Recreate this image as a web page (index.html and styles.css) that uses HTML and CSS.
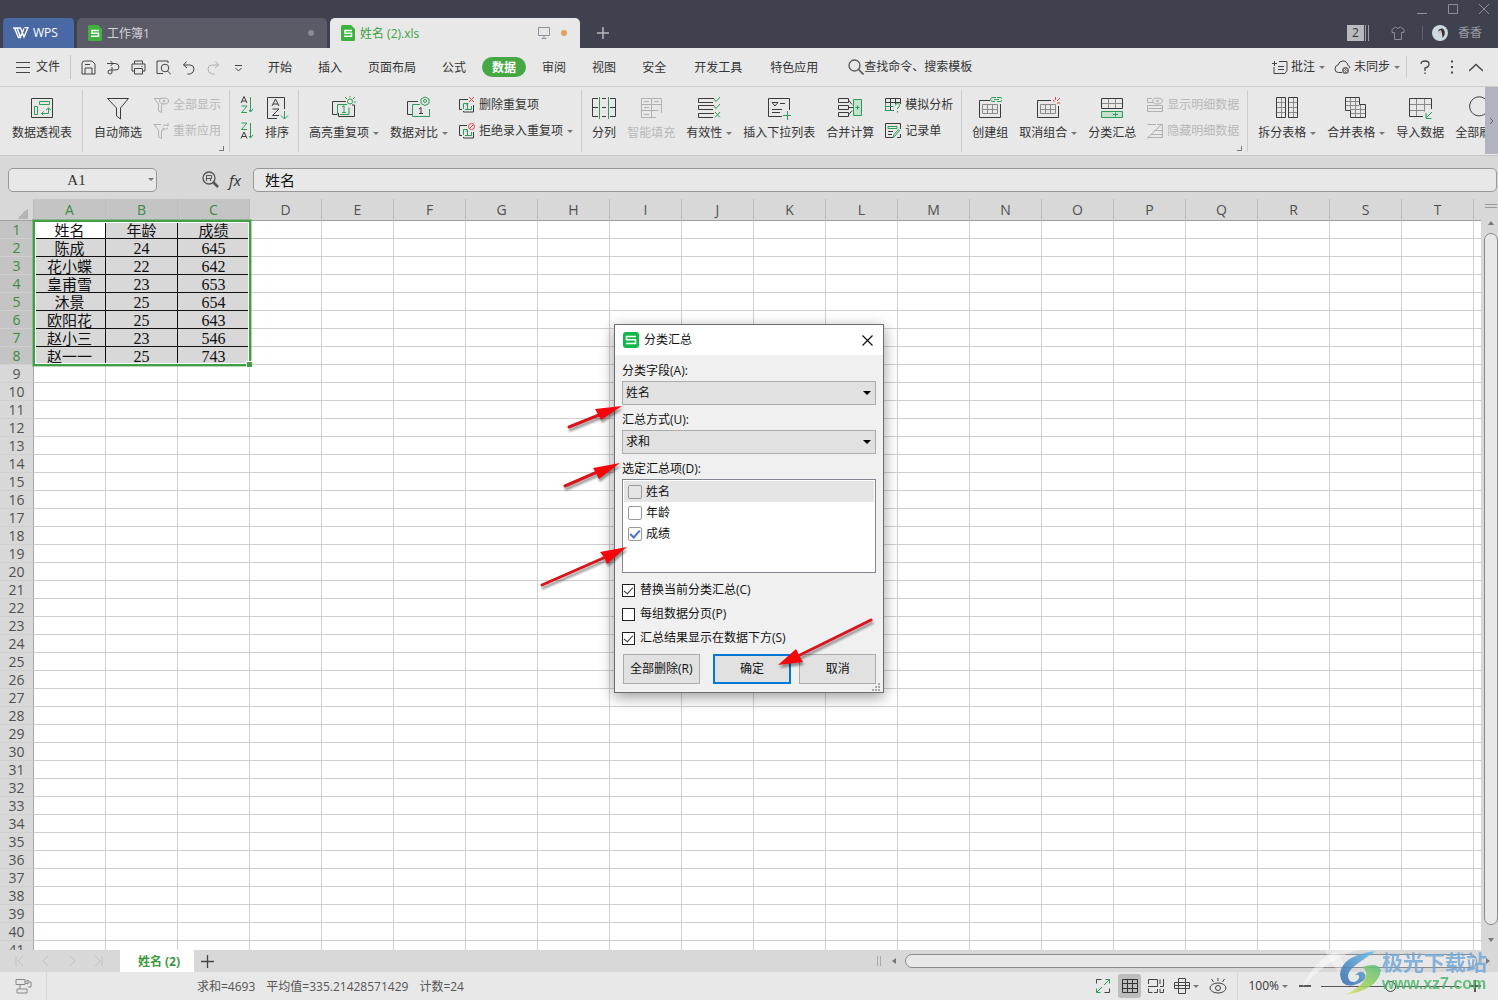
FILE: index.html
```html
<!DOCTYPE html>
<html lang="zh-CN">
<head>
<meta charset="utf-8">
<title>姓名 (2).xls - WPS</title>
<link rel="stylesheet" href="styles.css">
</head>
<body>
<header class="titlebar">
  <button class="app-tab"><svg width="16" height="12" viewBox="0 0 16 12"><path d="M0 1h4l3.5 9L11 1.500M4.500 1h3l3.500 9 4-9.500h-3.500M1.500 1l4 9.500h2" fill="none" stroke="#fff" stroke-width="1.400"/></svg>WPS</button>
  <div class="doc-tab"><svg width="14" height="16" viewBox="0 0 14 16"><path d="M0 1.500Q0 0 1.500 0H10l4 4v10.500q0 1.500-1.500 1.500h-11Q0 16 0 14.500z" fill="#3eb13e"/><path d="M11 5.500H4v2.700h6.500v3H3" fill="none" stroke="#fff" stroke-width="1.500"/></svg><span>工作簿1</span><i class="dot"></i></div>
  <div class="doc-tab active"><svg width="14" height="16" viewBox="0 0 14 16"><path d="M0 1.500Q0 0 1.500 0H10l4 4v10.500q0 1.500-1.500 1.500h-11Q0 16 0 14.500z" fill="#3eb13e"/><path d="M11 5.500H4v2.700h6.500v3H3" fill="none" stroke="#fff" stroke-width="1.500"/></svg><span>姓名 (2).xls</span><svg class="screen" width="12" height="12" viewBox="0 0 12 12"><path d="M.5.5h11v8H.5zM6 8.500v3M3.500 11.500h5" fill="none" stroke="#8a8f98"/></svg><i class="dot orange"></i></div>
  <button class="new-tab" aria-label="新建"><svg width="12" height="12" viewBox="0 0 12 12"><path d="M6 0v12M0 6h12" stroke="#b5b7bd" stroke-width="1.500"/></svg></button>
  <div class="title-right">
    <div class="window-controls">
      <svg width="12" height="12" viewBox="0 0 12 12"><path d="M1 10.500h10" stroke="#8d9099"/></svg>
      <svg width="12" height="12" viewBox="0 0 12 12"><path d="M1.500 1.500h9v9h-9z" fill="none" stroke="#8d9099"/></svg>
      <svg width="12" height="12" viewBox="0 0 12 12"><path d="M1 1l10 10M11 1L1 11" stroke="#8d9099"/></svg>
    </div>
    <div class="user-row">
      <span class="count">2</span><i class="bars"></i>
      <svg class="shirt" width="14" height="14" viewBox="0 0 14 14"><path d="M4.500 1L1 3.500v3h2.500v7h7v-7H13v-3L9.500 1Q7 4 4.500 1z" fill="none" stroke="#898c95"/></svg>
      <i class="divider"></i>
      <svg width="16" height="16" viewBox="0 0 16 16"><circle cx="8" cy="8" r="8" fill="#ced8e0"/><path d="M6 6Q7 3 10.500 3.500q3 1.500 2 6.500l-2 3-.5-5z" fill="#35313b"/><path d="M6 6.500l3-1.500 1 3.500-3 1z" fill="#d8c4c0"/></svg>
      <span class="user">香香</span>
    </div>
  </div>
</header>

<nav class="menubar">
  <button class="file"><svg width="14" height="11" viewBox="0 0 14 11"><path d="M0 .5h14M0 5.500h14M0 10.500h14" stroke="#444"/></svg>文件</button>
  <div class="quick">
    <svg viewBox="0 0 15 15"><path d="M1 3.500Q1 1 3.500 1H11l3 3v10H1zM4 14V8h7v6M4 4.500h5"/></svg>
    <svg viewBox="0 0 15 15"><path d="M1 3.500h8q4 0 4 3.500t-4 3H6v2q0 2-2 2t-2-2 2-2h2V7M4.500 1L7 3.500 4.500 6"/></svg>
    <svg viewBox="0 0 15 15"><path d="M3.500 4V1h8v3M3.500 11H1V4h13v7h-2.500M3.500 8.500h8V14h-8zM10.500 6.500h1"/></svg>
    <svg viewBox="0 0 15 15"><path d="M7 13.500H1V1h11v2M11.500 11l3.500 3.500"/><circle cx="9" cy="8" r="3.800"/></svg>
    <svg viewBox="0 0 15 15"><path d="M5.500 1.500L2.500 5 6 8M2.500 5H9q4 0 4 4t-4 5H6.500"/></svg>
    <svg class="off" viewBox="0 0 15 15"><path d="M9.500 1.500l3 3.500L9 8M12.500 5H6Q2 5 2 9t4 5h2.500"/></svg>
    <svg viewBox="0 0 15 15"><path d="M4 5.500h7M4.500 8l3 3 3-3"/></svg>
  </div>
  <div class="tabs">
    <a href="#">开始</a><a href="#">插入</a><a href="#">页面布局</a><a href="#">公式</a><a href="#" class="current">数据</a><a href="#">审阅</a><a href="#">视图</a><a href="#">安全</a><a href="#" class="wide">开发工具</a><a href="#" class="wide">特色应用</a>
  </div>
  <div class="search"><svg width="16" height="16" viewBox="0 0 16 16"><circle cx="6.500" cy="6.500" r="5.500" fill="none" stroke="#555" stroke-width="1.300"/><path d="M10.500 10.500l5 5" stroke="#555" stroke-width="1.600"/></svg>查找命令、搜索模板</div>
  <div class="menu-right">
    <span class="mr"><svg width="16" height="15" viewBox="0 0 16 15"><path d="M7 1.500h8v9l-2 3H2V7M0 3.500h5M2.500 1v5M6 6.500h6M6 9.500h6" fill="none" stroke="#444"/></svg>批注<i class="caret"></i></span>
    <span class="mr"><svg width="17" height="15" viewBox="0 0 17 15"><path d="M8 12.500H4.500Q1 12.500 1 9t3-4Q5 1 9 1t5 4.500q2 .5 2 2.500" fill="none" stroke="#444"/><circle cx="11.500" cy="10.500" r="3.500" fill="#777"/><path d="M10 9l3 3M13 9l-3 3" stroke="#e8e8e8"/></svg>未同步<i class="caret"></i></span>
    <i class="divider"></i>
    <svg class="help" width="10" height="15" viewBox="0 0 10 15"><path d="M1 4q0-3 4-3t4 3-4 4v3M5 12.500V14" fill="none" stroke="#444" stroke-width="1.300"/></svg>
    <svg width="4" height="15" viewBox="0 0 4 15"><path d="M1 1.500h2M1 7h2M1 12.500h2" stroke="#444" stroke-width="2"/></svg>
    <svg width="14" height="15" viewBox="0 0 14 15"><path d="M0 11l7-6.500L14 11" fill="none" stroke="#444" stroke-width="1.300"/></svg>
  </div>
</nav>

<section class="ribbon">
  <div class="group first">
    <button class="tool"><svg viewBox="0 0 24 24"><path d="M1.500 2.500h21v19h-21z"/><path class="g" d="M9.500 5.500h10v3h-10zM4.500 10.500h3v8h-3zM18.500 12v5.500h-7M16 14l2.500-2 2.500 2M13.500 15.500l-2 2 2 2"/></svg><span>数据透视表</span></button>
  </div>
  <div class="group">
    <button class="tool"><svg viewBox="0 0 24 24"><path d="M1.500 2.500h21l-8 9.500v11l-4-3v-8z"/></svg><span>自动筛选</span></button>
    <div class="stack off launch">
      <button class="small"><svg viewBox="0 0 16 16"><path d="M8 1.500H1l4.500 5.500v7l3 1.500V8L10 6.500"/><ellipse cx="11" cy="4" rx="4.500" ry="3"/><circle cx="11" cy="4" r="1"/></svg>全部显示</button>
      <button class="small"><svg viewBox="0 0 16 16"><path d="M8 1.500H1l4.500 5.500v7l3 1.500V8L10 6.500M10 3q2-2.500 5 0V0M15 5q-2 3-5 0v3"/></svg>重新应用</button>
    </div>
  </div>
  <div class="group">
    <div class="stack">
      <button class="small" aria-label="升序"><svg class="az" viewBox="0 0 14 18"><path d="M1 7l3-6.500L7 7M2 5h4"/><path class="g" d="M1.500 10H7l-5.500 6.500H7M10.500 1v15M13 13l-2.500 3L9 14"/></svg></button>
      <button class="small" aria-label="降序"><svg class="az" viewBox="0 0 14 18"><path class="g" d="M1.500 1H7L1.500 7.500H7M10.500 1v15M13 13l-2.500 3L9 14"/><path d="M1 16.500L4 10l3 6.500M2 14.500h4"/></svg></button>
    </div>
    <button class="tool"><svg viewBox="0 0 24 24"><path d="M19.500 13V1.500h-17v21H12M7 10l3.500-7L14 10M8 8h5M7.500 13H14l-6.500 6.500H14"/><path class="g" d="M19.500 15v8M16 19.500l3.500 3.500 3.500-3.500"/></svg><span>排序</span></button>
  </div>
  <div class="group">
    <button class="tool"><svg viewBox="0 0 24 24"><path d="M5 18.500H.5V5.500H14M20 9h2.500v11.500h-16V17"/><path class="g" d="M5.500 18.500v-10H15M8 18.500h9v-7M10 11l2-1.500v7M10 16.500h4"/><circle class="g" cx="18" cy="5.500" r="2.500"/><path class="g" d="M18 0v1.500M13 1l2 2M23 1l-2 2M22 6h2"/></svg><span>高亮重复项<i class="caret"></i></span></button>
    <button class="tool"><svg viewBox="0 0 24 24"><path d="M5 18.500H.5V5.500H11"/><path class="g" d="M13 8.500H5.500v12h17V13M18 1l4 2v4.500l-4 2-4-2V3z"/><circle class="g" cx="18" cy="5" r="1.500"/><path d="M12 13l2-1.500v6M12 17.500h4"/></svg><span>数据对比<i class="caret"></i></span></button>
    <div class="stack">
      <button class="small"><svg viewBox="0 0 16 16"><path d="M3 12.500H.5v-10H9M14.500 8v7h-10v-1"/><path class="g" d="M4.500 12V6.500h5M6 12.500h6.500V9M7 8.500L8.500 7v5"/><path class="r" d="M10 0l5 5M15 0l-5 5"/></svg>删除重复项</button>
      <button class="small"><svg viewBox="0 0 16 16"><path d="M3 12.500H.5v-10H8M14.500 9v6h-10v-1"/><path class="g" d="M4.500 12V6.500h4M6 12.500h6.500V9M7 8.500L8.500 7v5"/><circle class="r" cx="12.500" cy="3.500" r="3"/><path class="r" d="M10.500 5.500l4-4"/></svg>拒绝录入重复项<i class="caret"></i></button>
    </div>
  </div>
  <div class="group">
    <button class="tool"><svg viewBox="0 0 24 24"><path d="M6 2.500H.5v18H6M.5 11.500H6M10 2.500h4M10 11.500h4M10 20.500h4M18 2.500h5.500v18H18M18 11.500h5.500"/><path class="g" d="M7.500 1v22M16.500 1v22"/></svg><span>分列</span></button>
    <button class="tool off"><svg viewBox="0 0 24 24"><path d="M2.500 2.500h20V17M17 21.500H2.500v-19M12.500 2.500v19M2.500 8.500h20M2.500 14.500h17M5 5.500h5M15 5.500h5M5 11.500h5M5 18.500h5"/></svg><span>智能填充</span></button>
    <button class="tool"><svg viewBox="0 0 24 24"><path d="M17 2.500H1.500v4H16M17 9.500H1.500v4H16M17 17.500H1.500v4H16"/><path class="g" d="M17 3l2 2.500L23 1M17 10l2 2.500L23 8M18 16l5 5.500M23 16l-5 5.500"/></svg><span>有效性<i class="caret"></i></span></button>
    <button class="tool"><svg viewBox="0 0 24 24"><path d="M22.500 14V2.500h-21v18H15M5 6.500h6l-3 3.500zM13 7.500h5M5 13.500h10M5 16.500h8"/><path class="g" d="M20.500 15v9M16 19.500h8"/></svg><span>插入下拉列表</span></button>
    <button class="tool"><svg viewBox="0 0 24 24"><path d="M.5 2.500h10v4H.5zM.5 9.500h10v4H.5zM.5 16.500h10v4H.5zM11 4.500l3 4M11 18.500l3-4M11 11.500h4"/><path d="M15.500 3.500h8v16h-8z" class="gf"/><path class="g" d="M17.500 11.500h4M19.500 9.500v4"/></svg><span>合并计算</span></button>
    <div class="stack">
      <button class="small"><svg viewBox="0 0 16 16"><path d="M9 13.500H.5v-12h15V7M.5 5.500h15M5.500 1.500v12M10.500 1.500V7"/><path class="g" d="M.5 5.500V13.500H8M.5 9.500h8M10.500 8.500q0-2 2-2t2 2-2 2.500v1M12.500 14v1.500"/></svg>模拟分析</button>
      <button class="small"><svg viewBox="0 0 16 16"><path d="M15.500 6V.5H.5v14H8M12 14.500h3.500V11M3 8.500h5M3 11.500h4"/><path class="g" d="M3 3.500h9v2H3zM15 7l-5 6-2 1.500 1-3L14 6"/></svg>记录单</button>
    </div>
  </div>
  <div class="group">
    <button class="tool"><svg viewBox="0 0 24 24"><path d="M12 4.500H1.500v17h21V8"/><path class="t" d="M4.500 8.500h15v9h-15zM4.500 13.500h15M9.500 8.500v9M14.500 8.500v9"/><path class="g" d="M18 1.500h-3q-2.500 0-2.500 2T15 5.500h2M19 1.500h3q2.500 0 2.500 2t-2.500 2h-3M16 3.500h5"/></svg><span>创建组</span></button>
    <button class="tool"><svg viewBox="0 0 24 24"><path d="M15 4.500H1.500v17h21V10"/><path class="t" d="M4.500 8.500h15v9h-15zM4.500 13.500h15M9.500 8.500v9M14.500 8.500v9"/><path class="r" d="M17 4l1.500 2M19.500 1v3M24 2l-3 3M21 7h3"/></svg><span>取消组合<i class="caret"></i></span></button>
    <button class="tool"><svg viewBox="0 0 24 24"><path class="t" d="M1.500 7.500h21M8.500 2.500v10M15.500 2.500v10"/><path d="M1.500 2.500h21v10h-21z"/><path class="gf" d="M1.500 15.500h21v6h-21z"/><path class="g" d="M13 18.500h5M15.500 16.500v4"/></svg><span>分类汇总</span></button>
    <div class="stack off launch">
      <button class="small"><svg viewBox="0 0 16 16"><path d="M5 1.500H.5v4H6M15.500 8.500H.5v3h15zM.5 11.500v3h15v-3"/><ellipse cx="10.500" cy="4" rx="5" ry="3"/><circle cx="10.500" cy="4" r="1"/></svg>显示明细数据</button>
      <button class="small"><svg viewBox="0 0 16 16"><path d="M0 15.500L15 1M10 1.500h5.500v13H.5M7 7.500h8.500M4 11.500h11.500M.5 1.500H9"/></svg>隐藏明细数据</button>
    </div>
  </div>
  <div class="group last">
    <button class="tool"><svg viewBox="0 0 24 24"><path class="t" d="M1.500 6.500h9M1.500 11.500h9M1.500 16.500h9M6.500 1.500v20M13.500 6.500h9M13.500 11.500h9M13.500 16.500h9M18.500 1.500v20"/><path d="M1.500 1.500h9v20h-9zM13.500 1.500h9v20h-9z"/></svg><span>拆分表格<i class="caret"></i></span></button>
    <button class="tool"><svg viewBox="0 0 24 24"><path class="t" d="M1.500 5.500h14M1.500 9.500h14M6.500 1.500v13M11.500 1.500v20M6.500 17.500h15M6.500 13.500h15M16.500 8.500v13"/><path d="M15.500 8.500v-7h-14v13h5v7h15v-13z"/></svg><span>合并表格<i class="caret"></i></span></button>
    <button class="tool"><svg viewBox="0 0 24 24"><path class="t" d="M1.500 8.500h22M1.500 14.500H16M8.500 2.500v18M16.500 2.500v13"/><path d="M15 20.500H1.500v-18h22V13"/><path class="g" d="M24 16l-6 6M18 17v5.500h5.500"/></svg><span>导入数据</span></button>
    <button class="tool"><svg viewBox="0 0 24 24"><path d="M20 5A9.500 9.500 0 1 0 21.500 12"/></svg><span>全部刷新</span></button>
  </div>
  <button class="ribbon-scroll" aria-label="向右"><svg width="5" height="8" viewBox="0 0 5 8"><path d="M1 1l3 3-3 3" fill="none" stroke="#666"/></svg></button>
</section>

<section class="formula-bar">
  <label class="namebox"><input value="A1" aria-label="名称框"><i class="caret"></i></label>
  <svg class="lens" width="17" height="17" viewBox="0 0 17 17"><circle cx="7" cy="7" r="6" fill="none" stroke="#555" stroke-width="1.300"/><path d="M4.500 10V4.500h5v3h-5M8.500 7.500V10" fill="none" stroke="#555"/><path d="M11 11l5 5" stroke="#555" stroke-width="2.500"/></svg>
  <span class="fx">fx</span>
  <input class="formula" value="姓名" aria-label="编辑栏">
</section>

<main class="sheet">
  <div class="grid-area">
    <table class="grid"><thead></thead><tbody></tbody></table>
    <div class="selection"><i></i></div>
  </div>
  <div class="vscroll">
    <i class="split"></i><i class="up"></i><div class="thumb"></div><i class="down"></i>
  </div>
</main>

<section class="sheetbar">
  <div class="nav">
    <svg width="10" height="12" viewBox="0 0 10 12"><path d="M1 1v10M8 1L3 6l5 5"/></svg>
    <svg width="10" height="12" viewBox="0 0 10 12"><path d="M7 1L2 6l5 5"/></svg>
    <svg width="10" height="12" viewBox="0 0 10 12"><path d="M3 1l5 5-5 5"/></svg>
    <svg width="10" height="12" viewBox="0 0 10 12"><path d="M9 1v10M2 1l5 5-5 5"/></svg>
  </div>
  <button class="sheet-tab">姓名 (2)</button>
  <button class="add" aria-label="新建工作表"><svg width="13" height="13" viewBox="0 0 13 13"><path d="M6.500 0v13M0 6.500h13" stroke="#444" stroke-width="1.300"/></svg></button>
  <div class="hscroll"><i class="grip"></i><i class="left"></i><div class="thumb"></div><i class="right"></i></div>
</section>

<footer class="status">
  <div class="status-left"><svg width="17" height="16" viewBox="0 0 17 16"><path d="M1 1.500h9v5H1zM10 4l3-2v4l-3-1M13 4h3v5h-3M5 7v4M2 11h10v4H2z" fill="none" stroke="#888"/></svg></div>
  <p class="stats"><span>求和=4693</span><span>平均值=335.21428571429</span><span>计数=24</span></p>
  <div class="views">
    <svg width="16" height="16" viewBox="0 0 16 16"><path d="M1.500 5.500v-4h5M9.500 14.500h5v-4" fill="none" stroke="#444"/><path d="M9 7l5.500-5.500M10.500 1.500h4v4M7 9l-5.500 5.500M1.500 10.500v4h4" fill="none" stroke="#2d9a55"/></svg>
    <button class="view-on" aria-label="普通视图"><svg width="16" height="16" viewBox="0 0 16 16"><path d="M.5 1.500h15v13H.5zM.5 5.500h15M.5 10.500h15M5.500 1.500v13M10.500 1.500v13" fill="none" stroke="#333"/></svg></button>
    <svg width="16" height="16" viewBox="0 0 16 16"><path d="M.5 6V1.500h9v7H0M.5 10.500v4h4M6 14.500h3.500V11M12 8.500h3.500V1M12 1.500V6M15.500 11v3.500H12V11" fill="none" stroke="#444"/></svg>
    <span class="mr"><svg width="16" height="16" viewBox="0 0 16 16"><path d="M4.500.5h7v15h-7zM.5 4.500h15v6H.5zM.5 7.500h15" fill="none" stroke="#444"/></svg><i class="caret"></i></span>
    <svg width="18" height="16" viewBox="0 0 18 16"><path d="M9 0v3M2.500 1l2 3M15.500 1l-2 3" stroke="#444"/><ellipse cx="9" cy="10" rx="8" ry="5" fill="none" stroke="#444"/><circle cx="9" cy="10" r="2.500" fill="none" stroke="#444"/></svg>
    <i class="divider"></i>
    <span class="mr zoom">100%<i class="caret"></i></span>
    <svg width="12" height="12" viewBox="0 0 12 12"><path d="M0 6h12" stroke="#333" stroke-width="1.600"/></svg>
    <div class="slider"><i></i></div>
    <svg width="12" height="12" viewBox="0 0 12 12"><path d="M0 6h12M6 0v12" stroke="#333" stroke-width="1.600"/></svg>
  </div>
  <div class="watermark">
    <svg width="90" height="46" viewBox="0 0 90 46">
      <defs><linearGradient id="wb" x1="0" y1="1" x2="1" y2="0"><stop offset="0" stop-color="#2f66ac"/><stop offset="1" stop-color="#6ec2ea"/></linearGradient><linearGradient id="wg" x1="0" y1="1" x2="1" y2="0"><stop offset="0" stop-color="#e9e27a"/><stop offset=".5" stop-color="#94cf5c"/><stop offset="1" stop-color="#52bd80"/></linearGradient></defs>
      <path d="M0 38Q12 10 36 0h20Q26 8 0 38z" fill="#fff" opacity=".5"/><path d="M22 0h12l8 14-6 8z" fill="#fff" opacity=".4"/>
      <path d="M74 1Q40 5 38 24q1 14 14 11 14-4 11-11-3-5-10 1 5-1 4 3-3 6-9 3-5-5 2-13Q60 10 74 1z" fill="url(#wb)"/>
      <path d="M60 17q16-5 19 3-3 20-36 25 18-9 21-18 1-7-4-10z" fill="url(#wg)"/>
    </svg>
    <div><b>极光下载站</b><strong>www.xz7.com</strong></div>
  </div>
</footer>

<form class="dialog" onsubmit="return false">
  <div class="dialog-title">
    <svg width="16" height="16" viewBox="0 0 16 16"><rect width="16" height="16" rx="3" fill="#12b84a"/><path d="M13 4.500H3.500v3.300h9v3.700H3" fill="none" stroke="#fff" stroke-width="1.500"/></svg>
    <span>分类汇总</span>
    <button type="button" aria-label="关闭"><svg width="11" height="11" viewBox="0 0 11 11"><path d="M.5.5l10 10M10.500.5l-10 10" stroke="#111" stroke-width="1.200"/></svg></button>
  </div>
  <div class="dialog-body">
    <label class="caption" for="field">分类字段(A):</label>
    <div class="select"><select id="field"><option>姓名</option></select></div>
    <label class="caption" for="method">汇总方式(U):</label>
    <div class="select"><select id="method"><option>求和</option></select></div>
    <span class="caption">选定汇总项(D):</span>
    <div class="list">
      <label class="on"><input type="checkbox">姓名</label>
      <label><input type="checkbox">年龄</label>
      <label><input type="checkbox" checked>成绩</label>
    </div>
    <label class="option"><input type="checkbox" checked>替换当前分类汇总(C)</label>
    <label class="option"><input type="checkbox">每组数据分页(P)</label>
    <label class="option"><input type="checkbox" checked>汇总结果显示在数据下方(S)</label>
    <div class="buttons"><button class="clear">全部删除(R)</button><button class="primary">确定</button><button>取消</button></div>
  </div>
  <svg class="resize" width="9" height="9" viewBox="0 0 9 9"><path d="M6 1h2M3 4h2M6 4h2M0 7h2M3 7h2M6 7h2" stroke="#aaa" stroke-width="2"/></svg>
  <svg class="arrows" width="360" height="220" viewBox="0 0 360 220">
    <g stroke="#d8141c" stroke-width="3" stroke-linecap="round"><path d="M39 37l30-12M35 96l30-13M12 195l66-29M341 230l-73 36"/></g>
    <g fill="#f5060b"><path d="M92 16L65 19l3 5 3 6z"/><path d="M90 73L63 78l3 5 3 6z"/><path d="M97 157L70 162l4 5 3 7z"/><path d="M248 275l25-3-3-5-4-8z"/></g>
  </svg>
</form>
<script src="grid.js"></script>
</body>
</html>
```

FILE: styles.css
```css
* { box-sizing: border-box; }
html, body { height: 100%; }
body {
  margin: 0; display: flex; flex-direction: column; overflow: hidden; background: #e8e8e8; color: #333;
  font: 12px/16px "Open Sans", "Noto Sans CJK SC", sans-serif;
}
button, input, select { font: inherit; color: inherit; }
button { border: 0; background: none; padding: 0; }
a { color: inherit; text-decoration: none; }
svg { display: block; flex: none; }
i { flex: none; }
.caret { display: inline-block; width: 0; height: 0; border: 3px solid transparent; border-top: 3px solid #777; border-bottom: 0; margin-left: 4px; vertical-align: middle; }
.divider { width: 1px; height: 14px; background: #60636d; }

.titlebar { flex: none; height: 48px; display: flex; align-items: flex-end; gap: 3px; padding-left: 3px; background: #3f424e; }
.app-tab { width: 71px; height: 30px; display: flex; align-items: center; gap: 4px; padding-left: 10px; border-radius: 4px 4px 0 0; background: #4a69a4; color: #fff; }
.doc-tab { width: 250px; height: 30px; display: flex; align-items: center; gap: 5px; padding: 0 13px 0 11px; border-radius: 5px 5px 0 0; background: #5b5a67; color: #d4d4d8; }
.doc-tab.active { background: #e8e8e8; color: #3ba13f; }
.doc-tab span { flex: 1; padding-top: 1px; }
.dot { width: 6px; height: 6px; border-radius: 50%; background: #8a8a95; }
.dot.orange { background: #e2a05c; }
.screen { margin-right: 6px; }
.new-tab { align-self: flex-end; height: 30px; padding: 0 14px; }
.title-right { margin-left: auto; align-self: stretch; }
.window-controls { display: flex; justify-content: flex-end; gap: 19px; padding: 3px 8px 0 0; height: 24px; }
.user-row { display: flex; align-items: center; padding-right: 16px; height: 17px; color: #9a9ca4; }
.count { width: 17px; height: 16px; background: #b9babd; color: #333; text-align: center; }
.bars { width: 4px; height: 16px; border: solid #9a9ca3; border-width: 0 1px; margin: 0 22px 0 1px; }
.user-row .divider { margin: 0 9px 0 17px; }
.user { margin-left: 10px; }

.menubar { flex: none; height: 39px; display: flex; align-items: center; border-bottom: 1px solid #cfcfcf; padding: 0 15px 0 16px; }
.file { display: flex; align-items: center; gap: 6px; padding-right: 10px; height: 24px; border-right: 1px solid #c4c4c4; }
.quick { display: flex; gap: 10px; margin-left: 10px; }
.quick svg { width: 15px; height: 15px; fill: none; stroke: #444; }
.quick .off { opacity: .35; }
.tabs { display: flex; align-items: center; gap: 6px; margin-left: 12px; }
.tabs a { padding: 3px 10px 1px; border-radius: 10px; }
.tabs .wide { margin-left: 2px; }
.tabs .current { background: #45a845; color: #fff; font-weight: bold; }
.search { display: flex; align-items: center; margin-left: 20px; }
.menu-right { margin-left: auto; display: flex; align-items: center; gap: 12px; }
.mr { display: flex; align-items: center; gap: 3px; }
.mr + .mr { margin-left: -3px; }
.mr .caret { margin-left: 1px; }
.menu-right .divider { background: #ccc; height: 22px; margin-left: -6px; margin-right: 1px; }
.menu-right > svg { margin-right: 3px; }
.menu-right .help { margin-right: 8px; }
.menu-right > svg:last-child { margin-right: 0; }

.ribbon { flex: none; height: 69px; display: flex; overflow: hidden; position: relative; border-bottom: 1px solid #c6c6c6; }
.group { flex: none; display: flex; gap: 11px; padding: 9px 10px 0; position: relative; }
.group.first { padding: 9px 11px 0 12px; margin-right: 1px; }
.group::after { content: ""; position: absolute; right: 0; top: 3px; height: 62px; width: 1px; background: #cdcdcd; }
.group.last::after { display: none; }
.tool { display: flex; flex-direction: column; align-items: center; gap: 5px; height: 45px; white-space: nowrap; }
.tool .caret, .small .caret { width: 6px; }
.ribbon svg { fill: none; stroke: #3a3a3a; }
.ribbon .t { stroke: #8a8a8a; }
.tool svg { width: 24px; height: 24px; }
.ribbon .g { stroke: #2e9c58; }
.ribbon .gf { stroke: #2e9c58; fill: #c3e2cd; }
.ribbon .r { stroke: #e04545; }
.stack { display: flex; flex-direction: column; gap: 10px; padding-top: 1px; }
.stack:last-child { margin-right: -1px; }
.small { display: flex; align-items: center; gap: 4px; height: 16px; white-space: nowrap; }
.small svg { width: 16px; height: 16px; }
.small .caret { margin-left: 0; }
.small .az { width: 14px; height: 18px; }
.off { color: #b8b8b8; }
.ribbon .off svg { stroke: #b0b0b0; }
.launch::after { content: ""; position: absolute; right: 6px; bottom: 4px; width: 4px; height: 4px; border: solid #777; border-width: 0 1px 1px 0; }
.ribbon-scroll { position: absolute; right: 0; top: 0; bottom: 1px; width: 13px; background: #b1b4be; display: flex; align-items: center; justify-content: center; }

.formula-bar { flex: none; height: 43px; display: flex; align-items: center; padding: 4px 1px 0 8px; background: #d8d8d8; }
.namebox { width: 149px; position: relative; display: flex; align-items: center; }
.namebox input { width: 100%; height: 24px; border: 1px solid #989898; border-radius: 5px; background: #e8e8e8; text-align: center; padding: 2px 12px 0 0; font: 15px "Liberation Serif", serif; }
.namebox .caret { position: absolute; right: 3px; }
.lens { margin-left: 45px; }
.fx { font: italic 15px/20px "Open Sans", sans-serif; margin: 0 8px 0 10px; width: 16px; }
.formula { flex: 1; min-width: 0; height: 24px; border: 1px solid #989898; border-radius: 5px; background: #e8e8e8; padding: 0 11px; font: 15px "Noto Sans CJK SC", sans-serif; color: #111; }

.sheet { flex: 1; min-height: 0; display: flex; background: #d8d8d8; }
.grid-area { flex: 1; min-width: 0; overflow: hidden; position: relative; background: #fff; }
.grid { border-collapse: separate; border-spacing: 0; table-layout: fixed; width: 1546px; }
.grid th, .grid td { padding: 0; height: 18px; width: 72px; white-space: nowrap; text-align: center; border: solid #cfcfcf; border-width: 0 1px 1px 0; line-height: 17px; }
.grid th { font-size: 14px; font-weight: 400; color: #505050; background: #d8d8d8; }
.grid thead th { height: 22px; line-height: 21px; border-color: #bdbdbd; border-bottom-color: #a0a0a0; }
.grid tbody th, .grid .corner { width: 34px; border-right-color: #a8a8a8; }
.grid .corner { background: linear-gradient(135deg, #d8d8d8 50%, #b5b5b5 50%) 17px 9px / 11px 11px no-repeat #d8d8d8; border-right-color: #bdbdbd; }
.grid th.sel { background: #c4c4c4; color: #3c8a40; }
.grid td { font: 15px/17px "Noto Sans CJK SC", sans-serif; color: #111; }
.grid td.num { font: 16px/15px "Liberation Serif", serif; padding-top: 2px; }
.grid td.data { background: #d8d8d8; border-color: #111; }
.grid td.cursor { background: #fff; }
.selection { position: absolute; left: 33px; top: 21px; width: 218px; height: 146px; border: 2px solid #3f9f43; box-shadow: inset 0 0 0 1px #fff, 0 0 0 1px rgba(63, 159, 67, .4); }
.selection i { position: absolute; right: -3px; bottom: -3px; width: 6px; height: 6px; background: #3f9f43; border: solid #fff; border-width: 1px 0 0 1px; }
.vscroll { width: 17px; display: flex; flex-direction: column; align-items: flex-end; padding: 4px 0 25px; position: relative; }
.split { width: 12px; height: 4px; border: solid #999; border-width: 1px 0; margin: 1px 1px 13px 0; }
.up { border: 3px solid transparent; border-bottom: 4px solid #777; border-top: 0; margin: 0 4px 8px 0; }
.vscroll .thumb { flex: 1; width: 14px; border: 1px solid #8a8a8a; border-radius: 7px; background: #e8e8e8; }
.down { position: absolute; right: 4px; bottom: 8px; border: 3px solid transparent; border-top: 4px solid #777; border-bottom: 0; }

.sheetbar { flex: none; height: 22px; display: flex; align-items: center; background: #d8d8d8; }
.nav { width: 120px; display: flex; gap: 16px; padding-left: 15px; }
.nav svg { fill: none; stroke: #c2c2c2; }
.sheet-tab { width: 74px; height: 22px; background: #fff; color: #3c993f; font-weight: bold; padding: 2px 0 0 4px; }
.add { padding: 0 7px; }
.hscroll { flex: 1; max-width: 621px; margin-left: auto; display: flex; align-items: center; padding-right: 8px; }
.grip { width: 4px; height: 10px; border: solid #aaa; border-width: 0 1px; margin-right: 11px; }
.left { border: 3px solid transparent; border-right: 4px solid #777; border-left: 0; margin-right: 9px; }
.hscroll .thumb { flex: 1; height: 14px; border: 1px solid #8a8a8a; border-radius: 7px; background: #e8e8e8; }
.right { border: 3px solid transparent; border-left: 4px solid #777; border-right: 0; margin-left: 9px; }

.status { flex: none; height: 28px; display: flex; align-items: center; position: relative; color: #555; }
.status-left { width: 47px; height: 28px; padding: 6px 0 0 15px; border-right: 1px solid #d8d8d8; }
.stats { margin: 1px 0 0 150px; display: flex; gap: 11px; }
.views { margin-left: auto; display: flex; align-items: center; gap: 10px; padding-right: 17px; color: #333; }
.view-on { width: 23px; height: 24px; display: flex; align-items: center; justify-content: center; background: #bdbdbd; border-radius: 3px; margin: 0 -3px; }
.views .divider { height: 28px; background: #d8d8d8; }
.views .mr .caret { margin-left: 0; }
.zoom { margin-right: 1px; }
.slider { width: 138px; height: 12px; background: linear-gradient(#555, #555) 0 6px / 100% 1px no-repeat; display: flex; justify-content: center; align-items: center; }
.slider i { width: 11px; height: 11px; border: 1px solid #444; border-radius: 50%; background: #e8e8e8; }
.watermark { position: absolute; right: 10px; bottom: 4px; display: flex; opacity: .85; }
.watermark svg { margin-right: -10px; }
.watermark div { width: 106px; display: flex; flex-direction: column; justify-content: flex-start; white-space: nowrap; }
.watermark b { font-size: 21px; line-height: 24px; color: #75a9d8; }
.watermark strong { font: bold 16px/20px "Liberation Sans", sans-serif; color: #50b86b; }

.dialog { position: absolute; left: 50%; top: 324px; width: 270px; margin-left: -135px; background: #f0f0f0; border: 1px solid #6e6e6e; box-shadow: 0 4px 14px rgba(0, 0, 0, .4); color: #111; }
.dialog-title { height: 30px; background: #fff; display: flex; align-items: center; gap: 5px; padding: 0 10px 0 8px; }
.dialog-title button { margin-left: auto; }
.dialog-body { padding: 8px 7px; display: flex; flex-direction: column; }
.caption { line-height: 16px; margin-bottom: 2px; }
.select { position: relative; height: 24px; margin-bottom: 7px; }
.select select { appearance: none; width: 100%; height: 24px; padding: 0 3px; border: 1px solid #acacac; border-radius: 0; background: #e1e1e1; }
.select::after { content: ""; position: absolute; right: 5px; top: 10px; border: 4px solid transparent; border-top-color: #000; border-bottom: 0; }
.list { height: 94px; border: 1px solid #828790; background: #fff; padding: 1px; margin-bottom: 9px; }
.list label { height: 21px; display: flex; align-items: center; gap: 4px; padding-left: 4px; }
.list .on { background: #e5e5e5; }
.dialog input { appearance: none; margin: 0; width: 13px; height: 13px; border: 1px solid #222; background: #fff; display: flex; justify-content: center; flex: none; }
.dialog .list input { width: 14px; height: 14px; border-color: #999; border-radius: 2px; }
.dialog .list .on input { background: #e5e5e5; }
.dialog input:checked::after { content: ""; width: 4px; height: 8px; border: solid #333; border-width: 0 1px 1px 0; transform: rotate(42deg); }
.dialog .list input:checked::after { border-color: #4472c4; border-width: 0 2px 2px 0; }
.option { display: flex; align-items: center; gap: 5px; height: 16px; margin-bottom: 8px; }
.buttons { display: flex; gap: 8px; padding: 0 0 0 1px; }
.buttons button { flex: 1; height: 30px; background: #e1e1e1; border: 1px solid #adadad; white-space: nowrap; }
.buttons .clear { margin-right: 5px; }
.buttons .primary { border: 2px solid #0078d7; }
.resize { position: absolute; right: 2px; bottom: 0; }
.arrows { position: absolute; left: -85px; top: 65px; overflow: visible; filter: drop-shadow(1px 3px 1px rgba(0, 0, 0, .4)); pointer-events: none; }
```

FILE: grid.js
```javascript
const data = [
  ["姓名", "年龄", "成绩"],
  ["陈成", 24, 645],
  ["花小蝶", 22, 642],
  ["皇甫雪", 23, 653],
  ["沐景", 25, 654],
  ["欧阳花", 25, 643],
  ["赵小三", 23, 546],
  ["赵一一", 25, 743]
];
const columns = "ABCDEFGHIJKLMNOPQRST";
const rowCount = 41;

function cell(row, tag, text, className) {
  const el = document.createElement(tag);
  el.textContent = text;
  if (className) el.className = className;
  row.append(el);
}

const head = document.querySelector(".grid thead").insertRow();
cell(head, "th", "", "corner");
[...columns].forEach((name, c) => cell(head, "th", name, c < 3 ? "sel" : ""));
cell(head, "th", "", "");

const body = document.querySelector(".grid tbody");
for (let r = 0; r < rowCount; r++) {
  const row = body.insertRow();
  cell(row, "th", r + 1, r < data.length ? "sel" : "");
  for (let c = 0; c <= columns.length; c++) {
    const value = data[r] && data[r][c];
    let className = "";
    if (value !== undefined) {
      className = "data";
      if (typeof value === "number") className += " num";
      if (r === 0 && c === 0) className += " cursor";
    }
    cell(row, "td", value === undefined ? "" : value, className);
  }
}
```
